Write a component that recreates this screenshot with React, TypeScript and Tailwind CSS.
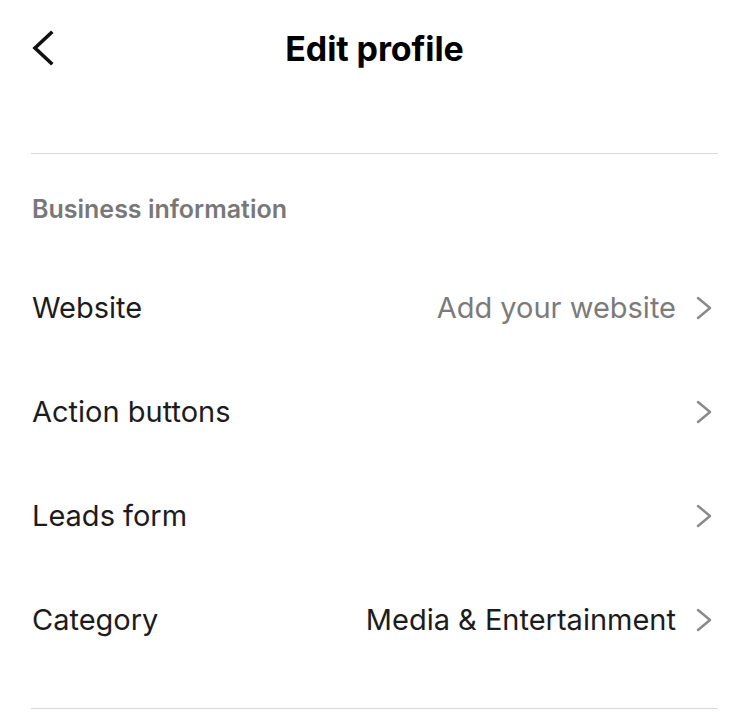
import { ReactNode } from "react";

function Chevron() {
  return (
    <svg width="18" height="24" viewBox="0 0 18 24" fill="none" className="mr-[4px] shrink-0">
      <path d="M3 2L15 12L3 22" stroke="#8a8a8a" strokeWidth="2.4" strokeLinecap="round" strokeLinejoin="round" />
    </svg>
  );
}

function Row({ label, value, muted }: { label: string; value?: ReactNode; muted?: boolean }) {
  return (
    <div className="flex h-[104px] items-center justify-between">
      <span className="text-[29px] text-[#1c1c1c]">{label}</span>
      <div className="flex items-center gap-[19px]">
        {value && (
          <span className={muted ? "text-[29px] text-[#7b7b7b]" : "text-[29px] text-[#1c1c1c]"}>{value}</span>
        )}
        <Chevron />
      </div>
    </div>
  );
}

export default function App() {
  return (
    <div className="w-[749px] h-[716px] bg-white font-['Inter',sans-serif] overflow-hidden">
      {/* Header */}
      <div className="relative flex h-[97px] items-center justify-center">
        <button className="absolute left-[30px] top-[30px]">
          <svg width="26" height="36" viewBox="0 0 26 36" fill="none">
            <path d="M21 3L5 18L21 33" stroke="#111" strokeWidth="3.6" strokeLinecap="square" />
          </svg>
        </button>
        <h1 className="text-[34px] font-bold text-black tracking-[-0.1px]">Edit profile</h1>
      </div>

      <div className="mx-[31px] mt-[56px] border-t border-[#d9d9d9]" />

      <div className="px-[32px]">
        <div className="pt-[37px] pb-[27px] text-[25px] font-semibold text-[#787878]">Business information</div>
        <Row label="Website" value="Add your website" muted />
        <Row label="Action buttons" />
        <Row label="Leads form" />
        <Row label="Category" value="Media & Entertainment" />
      </div>

      <div className="mx-[31px] mt-[36px] border-t border-[#d9d9d9]" />
    </div>
  );
}
